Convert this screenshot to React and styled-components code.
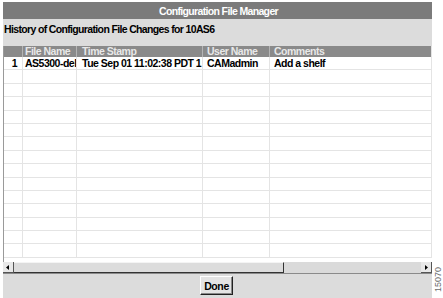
import React from "react";
import styled, { createGlobalStyle } from "styled-components";

const GlobalStyle = createGlobalStyle`
  html, body {
    margin: 0;
    padding: 0;
    background: #ffffff;
  }
  body {
    font-family: "Liberation Sans", Arial, sans-serif;
  }
`;

const columns = [
  { key: "num", title: "", width: 19, align: "right", pad: "0 5px 0 0" },
  { key: "file", title: "File Name", width: 54, pad: "0 0 0 2px" },
  { key: "time", title: "Time Stamp", width: 126, pad: "0 0 0 5px" },
  { key: "user", title: "User Name", width: 67, pad: "0 0 0 4px" },
  { key: "comments", title: "Comments", width: 0, pad: "0 0 0 4px" },
];

const rows = [
  { num: "1", file: "AS5300-del", time: "Tue Sep 01 11:02:38 PDT 1", user: "CAMadmin", comments: "Add a shelf" },
];

const EMPTY_ROWS = 14;

const Page = styled.div`
  position: relative;
  width: 443px;
  height: 298px;
  padding: 2px 11px 0 3px;
  box-sizing: border-box;
`;

const Window = styled.div`
  width: 429px;
  display: flex;
  flex-direction: column;
  background: #dcdcdc;
`;

const TitleBar = styled.div`
  height: 17px;
  background: #7b7b7b;
  color: #ffffff;
  font-size: 10.5px;
  font-weight: bold;
  letter-spacing: -0.65px;
  display: flex;
  align-items: center;
  justify-content: center;
  padding-left: 2px;
`;

const Subtitle = styled.div`
  height: 27px;
  padding: 4px 0 0 1px;
  box-sizing: border-box;
  font-size: 10.5px;
  font-weight: bold;
  letter-spacing: -0.65px;
  color: #000;
`;

const Table = styled.div`
  background: #ffffff;
  border-left: 1px solid #9a9a9a;
  display: flex;
  flex-direction: column;
  height: 216px;
  overflow: hidden;
`;

const Row = styled.div`
  display: flex;
  height: ${(p) => (p.$header ? "11px" : "13.4px")};
  background: ${(p) => (p.$header ? "#8a8a8a" : "#ffffff")};
  border-bottom: ${(p) => (p.$header ? "none" : "1px solid #e4e4e4")};
  box-sizing: border-box;
  flex-shrink: 0;
`;

const Cell = styled.div`
  flex: ${(p) => (p.$width ? `0 0 ${p.$width}px` : "1 1 auto")};
  box-sizing: border-box;
  overflow: hidden;
  white-space: nowrap;
  font-size: 10.5px;
  font-weight: bold;
  letter-spacing: -0.5px;
  line-height: ${(p) => (p.$header ? "11px" : "13px")};
  padding: ${(p) => p.$pad || "0"};
  text-align: ${(p) => p.$align || "left"};
  color: ${(p) => (p.$header ? "#e8e8e8" : "#000000")};
  border-right: 1px solid ${(p) => (p.$header ? "#b4b4b4" : "#e4e4e4")};
  &:last-child {
    border-right: 1px solid #e4e4e4;
  }
`;

const ScrollBar = styled.div`
  display: flex;
  height: 12px;
  background: #dcdcdc;
  border-bottom: 1px solid #8a8a8a;
  box-sizing: border-box;
`;

const ArrowButton = styled.div`
  width: 11px;
  flex: 0 0 11px;
  background: #e8e8e8;
  border-right: 1px solid #555;
  border-bottom: 1px solid #555;
  box-sizing: border-box;
  display: flex;
  align-items: center;
  justify-content: center;
  svg {
    display: block;
  }
`;

const Thumb = styled.div`
  flex: 0 0 270px;
  background: #dcdcdc;
  border-right: 1px solid #333;
  border-bottom: 1px solid #333;
  border-top: 1px solid #f4f4f4;
  box-sizing: border-box;
`;

const Track = styled.div`
  flex: 1 1 auto;
  background: #dadada;
`;

const Footer = styled.div`
  height: 24px;
  display: flex;
  justify-content: center;
  align-items: flex-start;
  padding-top: 2px;
  box-sizing: border-box;
`;

const Button = styled.button`
  width: 33px;
  height: 19px;
  padding: 0;
  margin-right: 2px;
  font-family: "Liberation Sans", Arial, sans-serif;
  font-size: 10.5px;
  font-weight: bold;
  letter-spacing: -0.4px;
  color: #000;
  background: #e4e4e4;
  border: 1px solid;
  border-color: #ffffff #222222 #222222 #ffffff;
  box-shadow: inset -1px -1px 0 #888;
`;

const FigureLabel = styled.div`
  position: absolute;
  right: 0px;
  top: 267px;
  width: 10px;
  height: 25px;
  writing-mode: vertical-rl;
  transform: rotate(180deg);
  font-size: 9px;
  color: #6a6a6a;
  text-align: center;
`;

const Arrow = ({ dir }) => (
  <svg width="5" height="5" viewBox="0 0 5 5">
    {dir === "left" ? (
      <polygon points="3,0 3,5 0,2.5" fill="#000" />
    ) : (
      <polygon points="1,0 1,5 4,2.5" fill="#000" />
    )}
  </svg>
);

export default function App() {
  return (
    <>
      <GlobalStyle />
      <Page>
        <Window>
          <TitleBar>Configuration File Manager</TitleBar>
          <Subtitle>History of Configuration File Changes for 10AS6</Subtitle>
          <Table>
            <Row $header>
              {columns.map((c) => (
                <Cell key={c.key} $header $width={c.width} $pad={c.pad}>
                  {c.title}
                </Cell>
              ))}
            </Row>
            {rows.map((r, i) => (
              <Row key={i}>
                {columns.map((c) => (
                  <Cell key={c.key} $width={c.width} $align={c.align} $pad={c.pad}>
                    {r[c.key]}
                  </Cell>
                ))}
              </Row>
            ))}
            {Array.from({ length: EMPTY_ROWS }).map((_, i) => (
              <Row key={`e${i}`}>
                {columns.map((c) => (
                  <Cell key={c.key} $width={c.width} />
                ))}
              </Row>
            ))}
          </Table>
          <ScrollBar>
            <ArrowButton>
              <Arrow dir="left" />
            </ArrowButton>
            <Thumb />
            <Track />
            <ArrowButton>
              <Arrow dir="right" />
            </ArrowButton>
          </ScrollBar>
          <Footer>
            <Button>Done</Button>
          </Footer>
        </Window>
        <FigureLabel>15070</FigureLabel>
      </Page>
    </>
  );
}
